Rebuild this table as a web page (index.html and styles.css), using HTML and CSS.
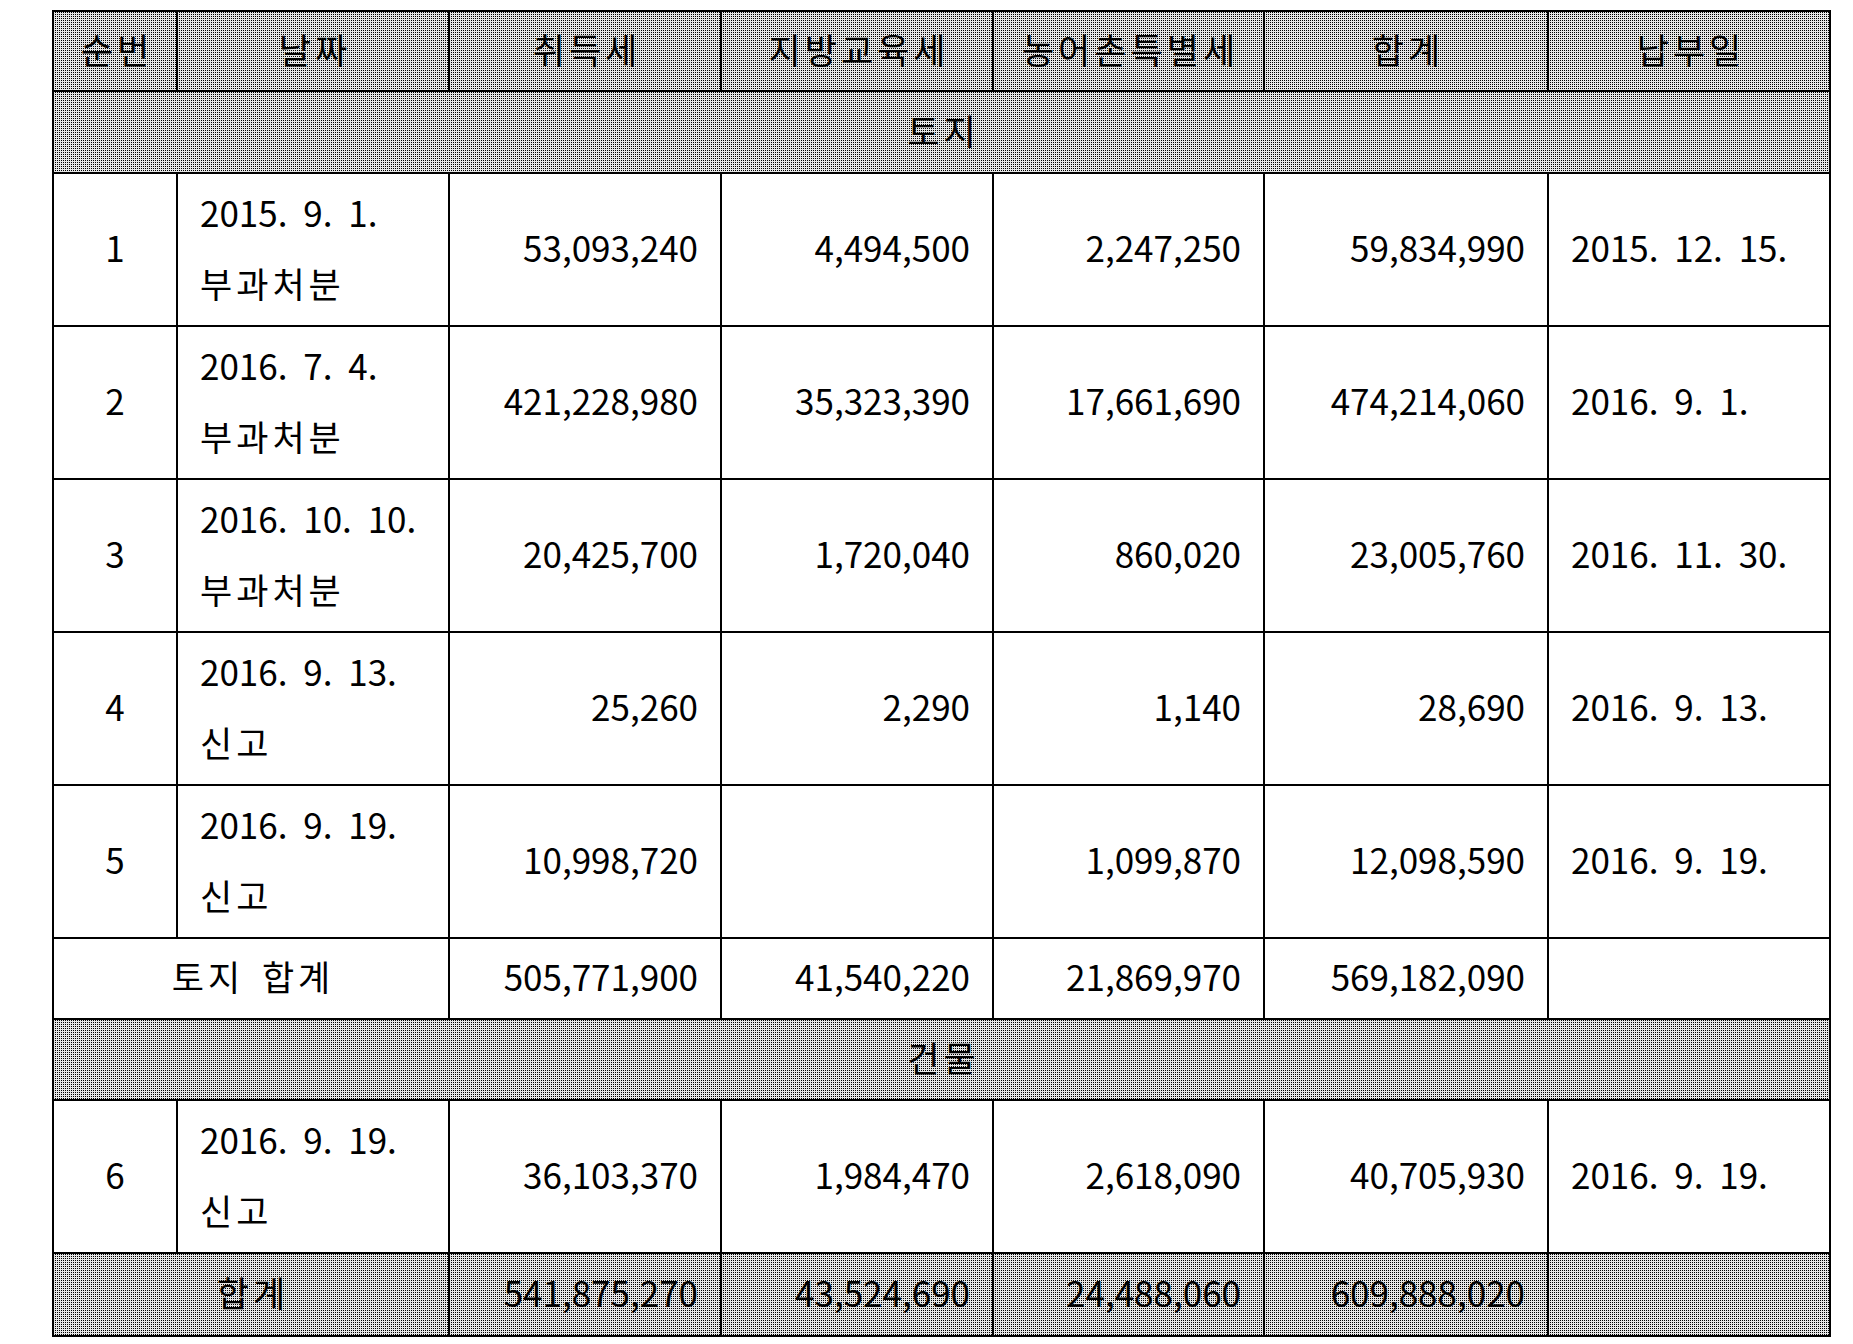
FILE: index.html
```html
<!DOCTYPE html>
<html lang="ko">
<head>
<meta charset="utf-8">
<title>취득세 납부 내역</title>
<link rel="stylesheet" href="styles.css">
</head>
<body>
<table class="tax">
  <colgroup>
    <col class="c-no"><col class="c-date"><col class="c-amt"><col class="c-amt"><col class="c-amt3"><col class="c-sum"><col class="c-pay">
  </colgroup>
  <thead>
    <tr class="r-head shade">
      <th>순번</th><th>날짜</th><th>취득세</th><th>지방교육세</th><th>농어촌특별세</th><th>합계</th><th>납부일</th>
    </tr>
  </thead>
  <tbody>
    <tr class="r-sec shade"><td colspan="7" class="ctr ko">토지</td></tr>
    <tr class="r-data">
      <td class="ctr">1</td>
      <td class="date"><div>2015. 9. 1.</div><div class="ko">부과처분</div></td>
      <td class="num">53,093,240</td><td class="num">4,494,500</td><td class="num">2,247,250</td><td class="num">59,834,990</td>
      <td class="date">2015. 12. 15.</td>
    </tr>
    <tr class="r-data">
      <td class="ctr">2</td>
      <td class="date"><div>2016. 7. 4.</div><div class="ko">부과처분</div></td>
      <td class="num">421,228,980</td><td class="num">35,323,390</td><td class="num">17,661,690</td><td class="num">474,214,060</td>
      <td class="date">2016. 9. 1.</td>
    </tr>
    <tr class="r-data">
      <td class="ctr">3</td>
      <td class="date"><div>2016. 10. 10.</div><div class="ko">부과처분</div></td>
      <td class="num">20,425,700</td><td class="num">1,720,040</td><td class="num">860,020</td><td class="num">23,005,760</td>
      <td class="date">2016. 11. 30.</td>
    </tr>
    <tr class="r-data">
      <td class="ctr">4</td>
      <td class="date"><div>2016. 9. 13.</div><div class="ko">신고</div></td>
      <td class="num">25,260</td><td class="num">2,290</td><td class="num">1,140</td><td class="num">28,690</td>
      <td class="date">2016. 9. 13.</td>
    </tr>
    <tr class="r-data">
      <td class="ctr">5</td>
      <td class="date"><div>2016. 9. 19.</div><div class="ko">신고</div></td>
      <td class="num">10,998,720</td><td class="num"></td><td class="num">1,099,870</td><td class="num">12,098,590</td>
      <td class="date">2016. 9. 19.</td>
    </tr>
    <tr class="r-sum">
      <td colspan="2" class="ctr ko wide">토지 합계</td>
      <td class="num">505,771,900</td><td class="num">41,540,220</td><td class="num">21,869,970</td><td class="num">569,182,090</td>
      <td></td>
    </tr>
    <tr class="r-sec2 shade"><td colspan="7" class="ctr ko">건물</td></tr>
    <tr class="r-data">
      <td class="ctr">6</td>
      <td class="date"><div>2016. 9. 19.</div><div class="ko">신고</div></td>
      <td class="num">36,103,370</td><td class="num">1,984,470</td><td class="num">2,618,090</td><td class="num">40,705,930</td>
      <td class="date">2016. 9. 19.</td>
    </tr>
    <tr class="r-total shade">
      <td colspan="2" class="ctr ko">합계</td>
      <td class="num">541,875,270</td><td class="num">43,524,690</td><td class="num">24,488,060</td><td class="num">609,888,020</td>
      <td></td>
    </tr>
  </tbody>
</table>
</body>
</html>
```

FILE: styles.css
```css
html, body {
  margin: 0;
  background: #ffffff;
}

body {
  padding: 10px 0 0 52px;
  font-family: "Noto Sans CJK KR", "Noto Sans", sans-serif;
  font-size: 35px;
  color: #000000;
}

.tax {
  border-collapse: collapse;
  table-layout: fixed;
  width: 1779px;
}

.c-no { width: 124px; }
.c-date { width: 272px; }
.c-amt { width: 272px; }
.c-amt3 { width: 271px; }
.c-sum { width: 284px; }
.c-pay { width: 282px; }

.tax th,
.tax td {
  border: 2px solid #000000;
  padding: 0 22px 6px 22px;
  vertical-align: middle;
  font-weight: 400;
  line-height: 71px;
  white-space: nowrap;
  overflow: hidden;
}

.tax th {
  text-align: center;
  padding: 0 0 6px 4px;
  letter-spacing: 4px;
}

.shade th,
.shade td {
  background-color: #e6e6e6;
  background-image: conic-gradient(#000000 0 25%, #e6e6e6 0 100%);
  background-size: 2px 2px;
}

.r-head { height: 80px; }
.r-sec { height: 82px; }
.r-sec2 { height: 81px; }
.r-data { height: 153px; }
.r-sum { height: 81px; }
.r-total { height: 83px; }

.ctr { text-align: center; }
.num { text-align: right; }
.date {
  text-align: left;
  word-spacing: 6px;
}

.ko { letter-spacing: 4px; }
.ctr.ko { padding-left: 26px; }
.wide { word-spacing: 4px; }
```
